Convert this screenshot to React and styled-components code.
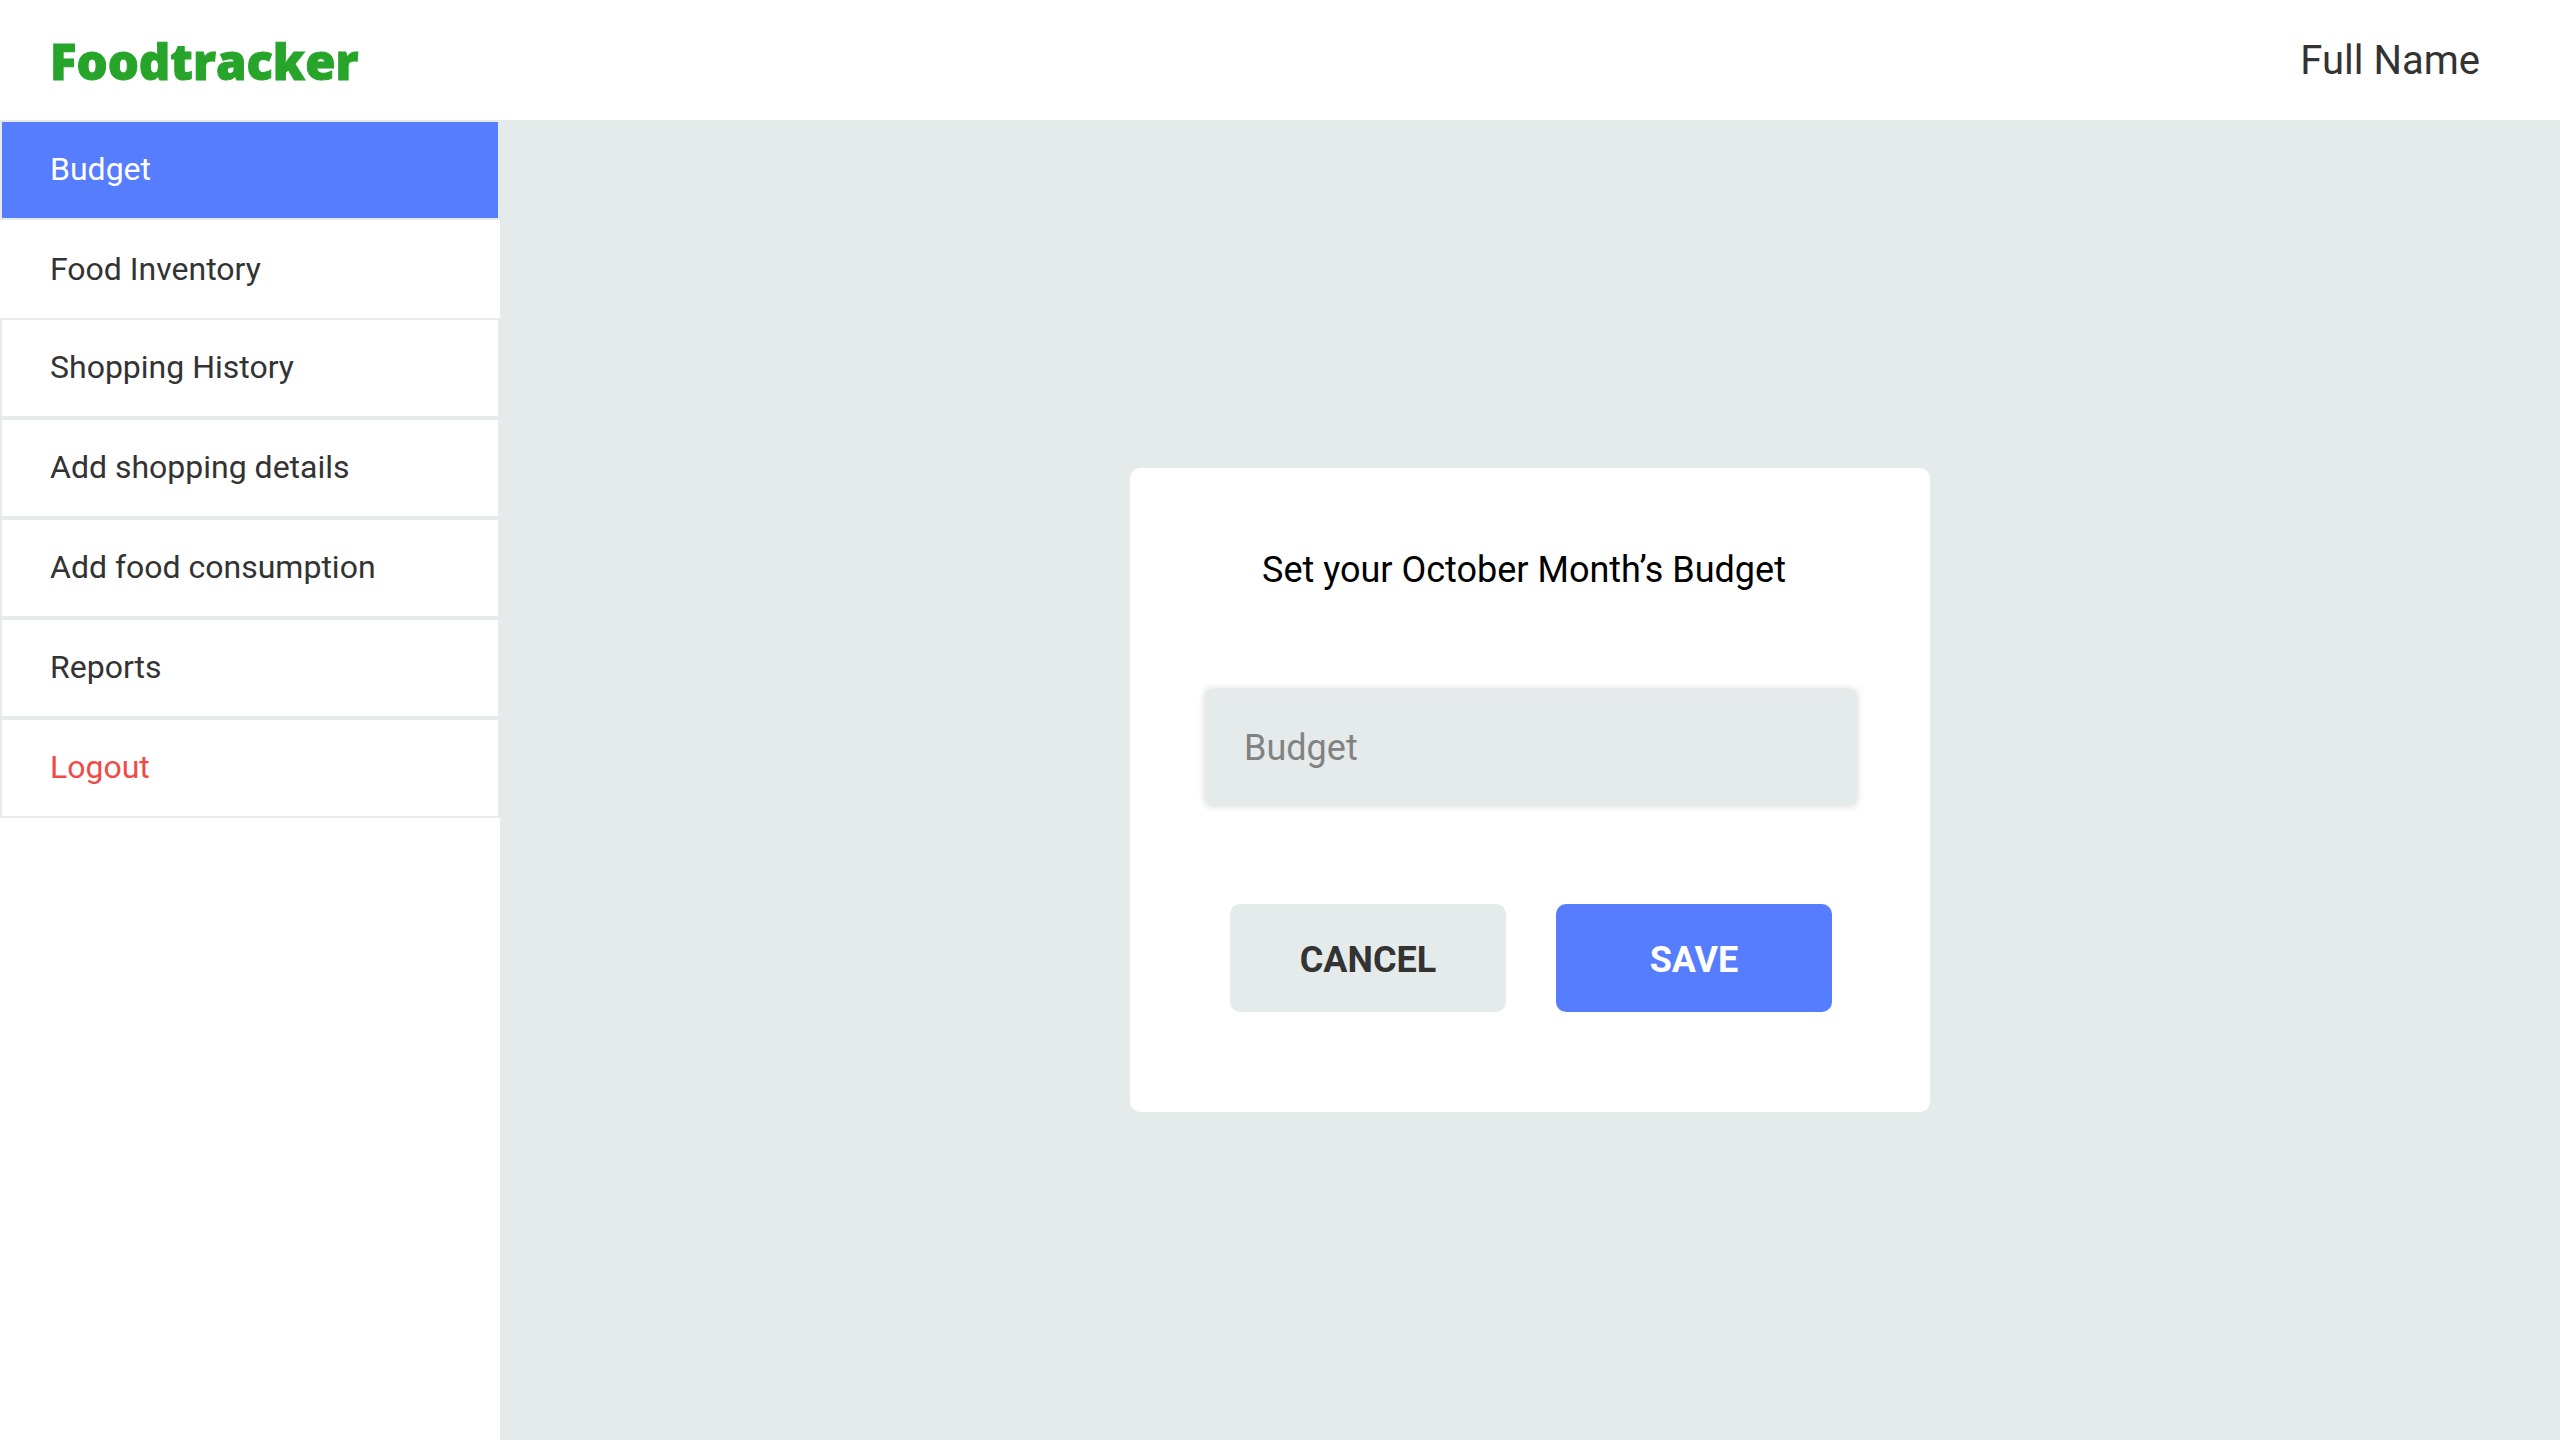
import React, { useState } from "react";
import styled, { createGlobalStyle, css } from "styled-components";

const colors = {
  surface: "#ffffff",
  canvas: "#e4ebea",
  primary: "#577dff",
  brand: "#27a42a",
  danger: "#f04a47",
  text: "#333333",
  muted: "#828282",
};

const GlobalStyle = createGlobalStyle`
  *, *::before, *::after { box-sizing: border-box; }
  body {
    margin: 0;
    background: ${colors.surface};
    color: ${colors.text};
    font-family: Roboto, "Liberation Sans", sans-serif;
  }
`;

const Page = styled.div`
  display: grid;
  grid-template-rows: 120px 1fr;
  min-height: 100vh;
`;

const Header = styled.header`
  display: flex;
  align-items: center;
  justify-content: space-between;
  padding: 2px 80px 0 50px;
  background: ${colors.surface};
`;

const Brand = styled.a`
  color: ${colors.brand};
  font-family: "Open Sans", "Noto Sans", sans-serif;
  font-size: 49px;
  font-weight: 800;
  line-height: 60px;
  text-decoration: none;
  -webkit-text-stroke: 1px ${colors.brand};
  stroke-linejoin: round;
`;

const UserName = styled.span`
  font-size: 40px;
  line-height: 48px;
`;

const Body = styled.div`
  display: grid;
  grid-template-columns: 500px 1fr;
`;

const Sidebar = styled.nav`
  background: ${colors.surface};
`;

const Menu = styled.ul`
  margin: 0;
  padding: 0;
  list-style: none;
`;

const MenuLink = styled.a`
  display: block;
  padding: 28px 48px 30px;
  border: 2px solid ${colors.canvas};
  color: ${colors.text};
  font-size: 32px;
  line-height: 38px;
  text-decoration: none;

  ${({ $active }) =>
    $active &&
    css`
      background: ${colors.primary};
      color: ${colors.surface};
    `}

  ${({ $plain }) =>
    $plain &&
    css`
      padding: 30px 50px;
      border: 0;
    `}

  ${({ $danger }) =>
    $danger &&
    css`
      color: ${colors.danger};
    `}
`;

const Main = styled.main`
  display: flex;
  align-items: center;
  justify-content: center;
  padding-top: 20px;
  background: ${colors.canvas};
`;

const Card = styled.form`
  display: flex;
  flex-direction: column;
  gap: 99px;
  width: 800px;
  max-width: 100%;
  padding: 81px 74px 100px 76px;
  border-radius: 10px;
  background: ${colors.surface};
`;

const Title = styled.label`
  padding-right: 14px;
  color: #000000;
  font-size: 36px;
  line-height: 42px;
  text-align: center;
`;

const BudgetInput = styled.input`
  width: 100%;
  height: 115px;
  padding: 0 38px;
  border: 0;
  border-radius: 4px;
  background: ${colors.canvas};
  box-shadow: 0 0 8px rgba(0, 0, 0, 0.2);
  color: ${colors.text};
  font-family: inherit;
  font-size: 36px;

  &::placeholder {
    color: ${colors.muted};
    opacity: 1;
  }
`;

const Actions = styled.div`
  display: flex;
  justify-content: center;
  gap: 50px;
`;

const Button = styled.button`
  width: 276px;
  height: 108px;
  padding: 4px 0 0;
  border: 0;
  border-radius: 10px;
  background: ${({ $primary }) => ($primary ? colors.primary : colors.canvas)};
  color: ${({ $primary }) => ($primary ? colors.surface : colors.text)};
  font-family: inherit;
  font-size: 36px;
  font-weight: 700;
  line-height: 42px;
  cursor: pointer;
`;

const menuItems = [
  { label: "Budget", active: true },
  { label: "Food Inventory", plain: true },
  { label: "Shopping History" },
  { label: "Add shopping details" },
  { label: "Add food consumption" },
  { label: "Reports" },
  { label: "Logout", danger: true },
];

export default function App() {
  const [budget, setBudget] = useState("");

  return (
    <>
      <GlobalStyle />
      <Page>
        <Header>
          <Brand href="#">Foodtracker</Brand>
          <UserName>Full Name</UserName>
        </Header>
        <Body>
          <Sidebar>
            <Menu>
              {menuItems.map((item) => (
                <li key={item.label}>
                  <MenuLink
                    href="#"
                    $active={item.active}
                    $plain={item.plain}
                    $danger={item.danger}
                  >
                    {item.label}
                  </MenuLink>
                </li>
              ))}
            </Menu>
          </Sidebar>
          <Main>
            <Card onSubmit={(event) => event.preventDefault()}>
              <Title htmlFor="budget">Set your October Month’s Budget</Title>
              <BudgetInput
                id="budget"
                type="text"
                inputMode="decimal"
                placeholder="Budget"
                value={budget}
                onChange={(event) => setBudget(event.target.value)}
              />
              <Actions>
                <Button type="button" onClick={() => setBudget("")}>
                  CANCEL
                </Button>
                <Button type="submit" $primary>
                  SAVE
                </Button>
              </Actions>
            </Card>
          </Main>
        </Body>
      </Page>
    </>
  );
}
